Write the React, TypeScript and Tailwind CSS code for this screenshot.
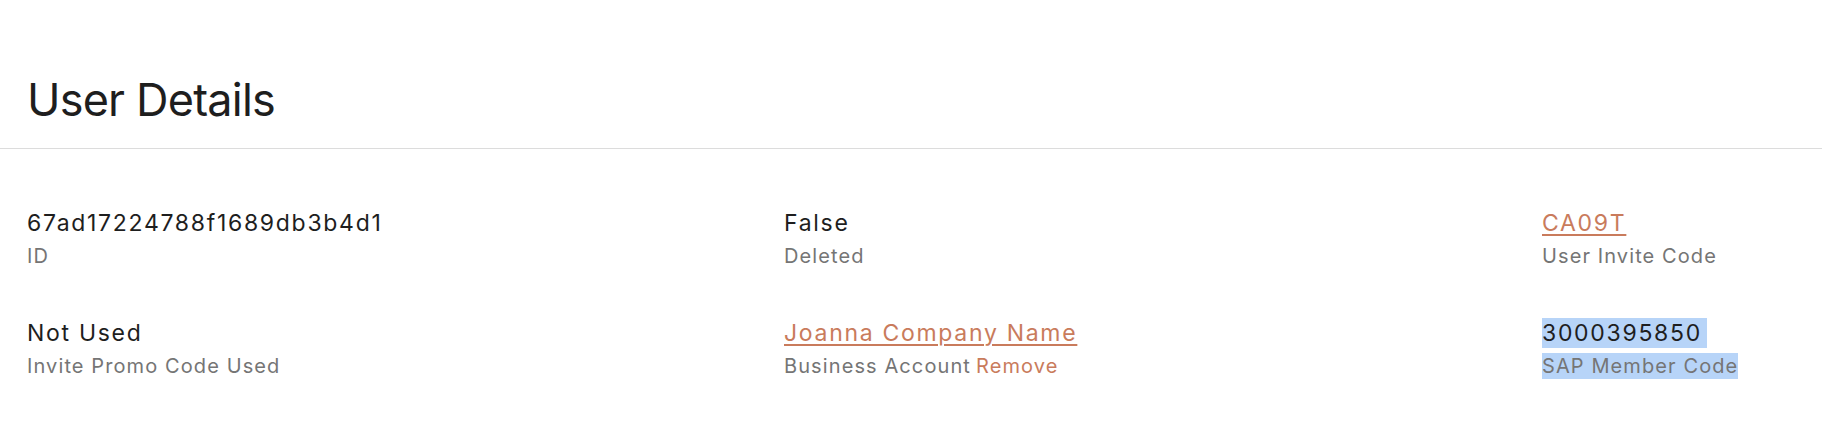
const fontStack = { fontFamily: "Inter, 'Noto Sans', sans-serif" };

function Field({
  value,
  label,
  link,
  extra,
  selected,
}: {
  value: string;
  label: string;
  link?: boolean;
  extra?: string;
  selected?: boolean;
}) {
  return (
    <div className="flex flex-col items-start">
      <div
        className={
          "text-[23px] leading-[30px] tracking-[1.7px] " +
          (link
            ? "text-[#c97b5c] underline underline-offset-[3px] decoration-[2px]"
            : "text-[#1e1e1e]") +
          (selected ? " bg-[#b7d4f8] pr-[5px]" : "")
        }
      >
        {value}
      </div>
      <div
        className={
          "mt-[5px] text-[20px] leading-[26px] tracking-[1.1px] text-[#757575]" +
          (selected ? " bg-[#b7d4f8] text-[#5d6878]" : "")
        }
      >
        {label}
        {extra && <span className="ml-[5px] text-[#c97b5c]">{extra}</span>}
      </div>
    </div>
  );
}

export default function App() {
  return (
    <div className="w-[1822px] h-[430px] bg-white overflow-hidden" style={fontStack}>
      {/* Header */}
      <div className="pt-[70px] pb-[18px] px-[27px] border-b border-[#dcdcdc]">
        <h1 className="text-[45px] leading-[60px] tracking-[-0.8px] text-[#1e1e1e] font-normal">
          User Details
        </h1>
      </div>

      {/* Details */}
      <div className="grid grid-cols-[757px_758px_1fr] gap-y-[49px] pt-[59px] px-[27px]">
        <Field value="67ad17224788f1689db3b4d1" label="ID" />
        <Field value="False" label="Deleted" />
        <Field value="CA09T" label="User Invite Code" link />

        <Field value="Not Used" label="Invite Promo Code Used" />
        <Field value="Joanna Company Name" label="Business Account" link extra="Remove" />
        <Field value="3000395850" label="SAP Member Code" selected />
      </div>
    </div>
  );
}
